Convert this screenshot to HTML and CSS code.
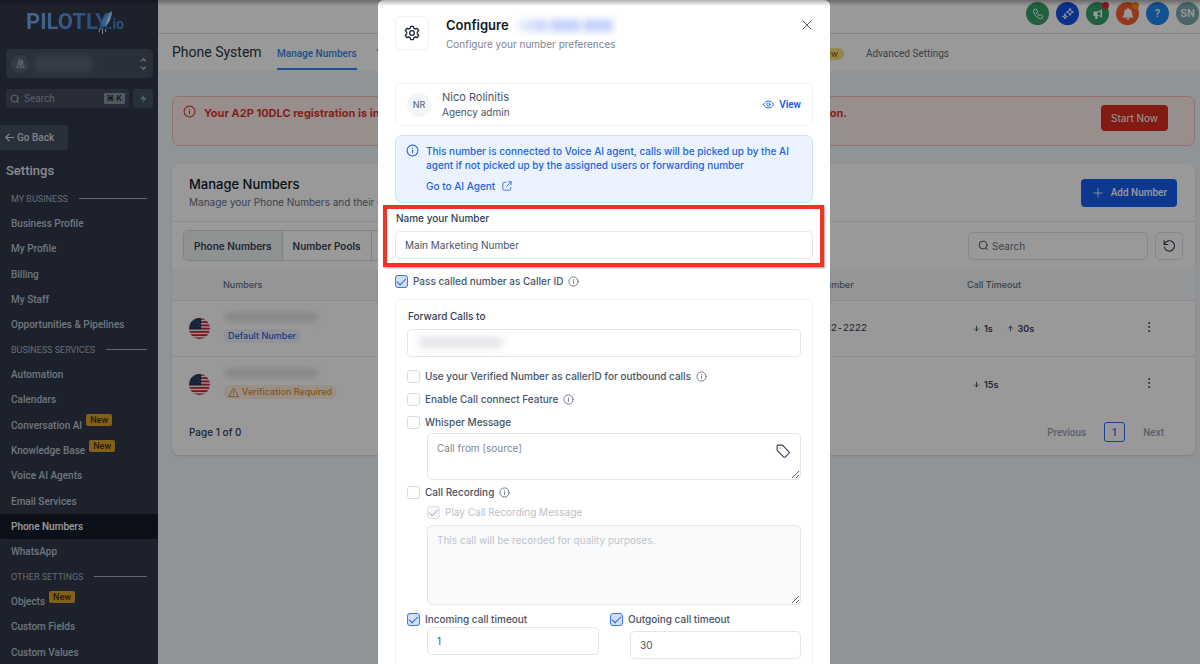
FILE: index.html
```html
<!DOCTYPE html>
<html lang="en">
<head>
    <meta charset="UTF-8">
    <meta name="viewport" content="width=device-width, initial-scale=1.0">
    <title>Phone System - Manage Numbers</title>
    <link rel="stylesheet" href="styles.css">
</head>
<body>
    <!-- Shared icons -->
    <svg class="sprite" aria-hidden="true">
        <symbol id="icon-info" viewBox="0 0 24 24"><circle cx="12" cy="12" r="10"/><path d="M12 16v-5M12 8v.01"/></symbol>
        <symbol id="icon-search" viewBox="0 0 24 24"><circle cx="11" cy="11" r="8.5"/><path d="M21 21l-4-4"/></symbol>
        <symbol id="icon-dots" viewBox="0 0 24 24"><circle cx="12" cy="4" r="1"/><circle cx="12" cy="12" r="1"/><circle cx="12" cy="20" r="1"/></symbol>
        <symbol id="icon-down" viewBox="0 0 24 24"><path d="M12 4v16M5 13l7 7 7-7"/></symbol>
        <symbol id="icon-up" viewBox="0 0 24 24"><path d="M12 20V4M5 11l7-7 7 7"/></symbol>
        <symbol id="icon-flag" viewBox="0 0 20 20">
            <clipPath id="flag-clip"><circle cx="10" cy="10" r="10"/></clipPath>
            <g clip-path="url(#flag-clip)">
                <rect width="20" height="20" fill="#f2eeee"/>
                <path d="M0 .8h20M0 3.9h20M0 7h20M0 10.1h20M0 13.2h20M0 16.3h20M0 19.4h20" stroke="#d0202f" stroke-width="1.6"/>
                <rect width="11.5" height="10.7" fill="#26375c"/>
                <path d="M2 2h9M1 4h10M2 6h9M1 8h10" stroke="#8f9bb8" stroke-width=".5" stroke-dasharray=".6 1.2"/>
            </g>
        </symbol>
    </svg>

    <div class="app">
        <aside class="sidebar">
            <div class="logo">
                <span class="logo-name">PILOTLY</span><span class="logo-tld">.io</span>
                <svg class="logo-rocket" viewBox="0 0 16 26" aria-hidden="true">
                    <path d="M14.500 1C9 4 5 9 4 15l4 2c4-4 7-9 6.500-16z" fill="#5b9fe8"/>
                    <path d="M14.500 1C11 6 9 12 8 17c4-4 7-9 6.500-16z" fill="#b8dcff"/>
                    <path d="M5 12l-4 5 3-1zM10 15l1 5-3-3z" fill="#3578c8"/>
                    <path d="M3 18l-1 4M5.500 19v5M8 19l1 3" stroke="#d6e2ee" stroke-width="1"/>
                </svg>
            </div>

            <button class="account" type="button" aria-label="Switch account">
                <span class="account-icon">
                    <svg class="icon" viewBox="0 0 24 24"><circle cx="12" cy="8" r="6"/><circle cx="12" cy="8" r="2"/><path d="M7 12c1 3 3 4 5 7 2-3 4-4 5-7M5 15l-3 7h20l-3-7"/></svg>
                </span>
                <span class="account-blur"></span>
                <svg class="icon account-arrows" viewBox="0 0 12 24"><path d="M2 7l4-4 4 4M2 17l4 4 4-4"/></svg>
            </button>

            <div class="quick">
                <label class="quick-search">
                    <svg class="icon" aria-hidden="true"><use href="#icon-search"/></svg>
                    <input type="text" placeholder="Search" aria-label="Search">
                    <kbd>⌘ K</kbd>
                </label>
                <button class="quick-bolt" type="button" aria-label="Quick actions">
                    <svg viewBox="0 0 24 24"><path d="M14 1L3 14h8l-1 9 11-13h-8z" fill="#5fb5ab"/></svg>
                </button>
            </div>

            <a class="go-back" href="#">
                <svg class="icon" viewBox="0 0 24 24" aria-hidden="true"><path d="M23 12H2M11 3l-9 9 9 9"/></svg>
                Go Back
            </a>

            <h2 class="sidebar-title">Settings</h2>

            <nav>
                <h3 class="group-title">MY BUSINESS</h3>
                <ul class="group">
                    <li><a href="#">Business Profile</a></li>
                    <li><a href="#">My Profile</a></li>
                    <li><a href="#">Billing</a></li>
                    <li><a href="#">My Staff</a></li>
                    <li><a href="#">Opportunities &amp; Pipelines</a></li>
                </ul>
                <h3 class="group-title">BUSINESS SERVICES</h3>
                <ul class="group">
                    <li><a href="#">Automation</a></li>
                    <li><a href="#">Calendars</a></li>
                    <li><a href="#">Conversation AI <span class="tag-new">New</span></a></li>
                    <li><a href="#">Knowledge Base <span class="tag-new">New</span></a></li>
                    <li><a href="#">Voice AI Agents</a></li>
                    <li><a href="#">Email Services</a></li>
                    <li><a class="active" href="#">Phone Numbers</a></li>
                    <li><a href="#">WhatsApp</a></li>
                </ul>
                <h3 class="group-title">OTHER SETTINGS</h3>
                <ul class="group">
                    <li><a href="#">Objects <span class="tag-new">New</span></a></li>
                    <li><a href="#">Custom Fields</a></li>
                    <li><a href="#">Custom Values</a></li>
                </ul>
            </nav>
        </aside>

        <div class="content">
            <header class="topbar">
                <button class="round green" type="button" aria-label="Phone">
                    <svg class="icon" viewBox="0 0 24 24"><path d="M7 2L3 4c-1 8 8 18 17 17l2-4-5-4-3 2c-2-1-4-3-5-5l2-3z"/></svg>
                </button>
                <button class="round blue" type="button" aria-label="AI">
                    <svg class="icon" viewBox="0 0 24 24"><path d="M16 1l2 5 5 2-5 2-2 5-2-5-5-2 5-2zM6 12l1 4 4 1-4 1-1 4-1-4-4-1 4-1z"/></svg>
                </button>
                <button class="round green" type="button" aria-label="Announcements">
                    <svg viewBox="0 0 24 24" fill="#fff"><path d="M20 2v18c-3-3-6-4-9-4v6H7l-1-6H3V7h7c4 0 7-2 10-5zm-3 5c-2 1-4 2-6 2v5c2 0 4 1 6 2z"/></svg>
                    <span class="dot red"></span>
                </button>
                <button class="round orange" type="button" aria-label="Notifications">
                    <svg viewBox="0 0 24 24" fill="#fff"><path d="M12 0c1 0 2 1 2 2 4 1 6 4 6 8 0 5 2 6 3 9H1c1-3 3-4 3-9 0-4 2-7 6-8 0-1 1-2 2-2zM9 20h6c0 4-6 4-6 0z"/></svg>
                    <span class="dot amber"></span>
                </button>
                <button class="round sky" type="button">?</button>
                <button class="round teal" type="button">SN</button>
            </header>

            <div class="tabbar">
                <h1>Phone System</h1>
                <nav class="tabs">
                    <a class="active" href="#">Manage Numbers</a>
                    <a href="#">Voice Calls</a>
                </nav>
                <nav class="tabs tabs-end">
                    <a href="#">Trust Center <span class="pill-new">New</span></a>
                    <a href="#">Advanced Settings</a>
                </nav>
            </div>

            <main>
                <section class="notice">
                    <svg class="icon" aria-hidden="true"><use href="#icon-info"/></svg>
                    <p><span>Your A2P 10DLC registration is in</span><span>action.</span></p>
                    <button type="button">Start Now</button>
                </section>

                <section class="card">
                    <div class="card-head">
                        <div>
                            <h2>Manage Numbers</h2>
                            <p>Manage your Phone Numbers and their configuration</p>
                        </div>
                        <button class="add" type="button">
                            <svg class="icon" viewBox="0 0 24 24" aria-hidden="true"><path d="M12 2v20M2 12h20"/></svg>
                            Add Number
                        </button>
                    </div>

                    <div class="toolbar">
                        <div class="segments">
                            <button class="active" type="button">Phone Numbers</button>
                            <button type="button">Number Pools</button>
                            <button type="button">Settings</button>
                        </div>
                        <label class="search">
                            <svg class="icon" aria-hidden="true"><use href="#icon-search"/></svg>
                            <input type="text" placeholder="Search" aria-label="Search numbers">
                        </label>
                        <button class="reload" type="button" aria-label="Reload">
                            <svg class="icon" viewBox="0 0 24 24"><path d="M2 3v7h7M3 9a9.500 9.500 0 1 1-.5 6"/></svg>
                        </button>
                    </div>

                    <table>
                        <thead>
                            <tr>
                                <th class="col-flag"></th>
                                <th class="col-number">Numbers</th>
                                <th class="col-forward">Forwarding Number</th>
                                <th class="col-timeout">Call Timeout</th>
                                <th></th>
                            </tr>
                        </thead>
                        <tbody>
                            <tr>
                                <td class="col-flag"><svg class="flag"><use href="#icon-flag"/></svg></td>
                                <td><span class="number-blur"></span><span class="pill">Default Number</span></td>
                                <td class="forward">+1 222-222-2222</td>
                                <td>
                                    <span class="time"><svg class="icon"><use href="#icon-down"/></svg>1s</span>
                                    <span class="time"><svg class="icon"><use href="#icon-up"/></svg>30s</span>
                                </td>
                                <td><button class="more" type="button" aria-label="More"><svg class="icon"><use href="#icon-dots"/></svg></button></td>
                            </tr>
                            <tr>
                                <td class="col-flag"><svg class="flag"><use href="#icon-flag"/></svg></td>
                                <td>
                                    <span class="number-blur"></span>
                                    <span class="pill warn">
                                        <svg class="icon" viewBox="0 0 24 24"><path d="M12 3L1.500 21h21zM12 10v5M12 18v.01"/></svg>
                                        Verification Required
                                    </span>
                                </td>
                                <td></td>
                                <td><span class="time"><svg class="icon"><use href="#icon-down"/></svg>15s</span></td>
                                <td><button class="more" type="button" aria-label="More"><svg class="icon"><use href="#icon-dots"/></svg></button></td>
                            </tr>
                        </tbody>
                    </table>

                    <div class="pager">
                        <span class="pager-info">Page 1 of 0</span>
                        <button type="button">Previous</button>
                        <button class="current" type="button">1</button>
                        <button type="button">Next</button>
                    </div>
                </section>
            </main>
        </div>
    </div>

    <!-- Configure number dialog -->
    <div class="overlay">
        <div class="modal" role="dialog" aria-labelledby="modal-title">
            <header class="modal-head">
                <span class="modal-icon">
                    <svg class="icon" viewBox="0 0 24 24"><circle cx="12" cy="12" r="3.500"/><path d="M10 2h4l.8 3 2 1 3-.9 2.300 3.300-2 2.300v2.600l2 2.300-2.300 3.300-3-.9-2 1L14 22h-4l-.8-3-2-1-3 .9-2.300-3.300 2-2.300v-2.600l-2-2.300 2.300-3.300 3 .9 2-1z"/></svg>
                </span>
                <div class="modal-titles">
                    <h2 id="modal-title">Configure <span class="title-blur"><i></i><i></i><i></i></span></h2>
                    <p>Configure your number preferences</p>
                </div>
                <button class="close" type="button" aria-label="Close">
                    <svg class="icon" viewBox="0 0 24 24"><path d="M4 4l16 16M20 4L4 20"/></svg>
                </button>
            </header>

            <div class="user">
                <span class="avatar">NR</span>
                <div class="user-text">
                    <strong>Nico Rolinitis</strong>
                    <span>Agency admin</span>
                </div>
                <a class="view" href="#">
                    <svg class="icon" viewBox="0 0 24 24" aria-hidden="true"><path d="M1 12c5-10 17-10 22 0-5 10-17 10-22 0z"/><circle cx="12" cy="12" r="3.500"/></svg>
                    View
                </a>
            </div>

            <div class="agent">
                <svg class="icon" aria-hidden="true"><use href="#icon-info"/></svg>
                <div>
                    <p>This number is connected to Voice AI agent, calls will be picked up by the AI agent if not picked up by the assigned users or forwarding number</p>
                    <a href="#">Go to AI Agent
                        <svg class="icon" viewBox="0 0 24 24" aria-hidden="true"><path d="M9 3H5a3 3 0 0 0-3 3v13a3 3 0 0 0 3 3h13a3 3 0 0 0 3-3v-4M15 2h7v7M22 2L11 13"/></svg>
                    </a>
                </div>
            </div>

            <div class="field highlighted">
                <label for="number-name">Name your Number</label>
                <input type="text" id="number-name" value="Main Marketing Number">
            </div>

            <label class="check">
                <input type="checkbox" checked>
                Pass called number as Caller ID
                <svg class="icon"><use href="#icon-info"/></svg>
            </label>

            <div class="panel">
                <div class="field">
                    <label for="forward-to">Forward Calls to</label>
                    <div class="forward-box">
                        <input type="text" id="forward-to">
                        <span class="forward-blur"></span>
                    </div>
                </div>

                <div class="options">
                    <label class="check">
                        <input type="checkbox">
                        Use your Verified Number as callerID for outbound calls
                        <svg class="icon"><use href="#icon-info"/></svg>
                    </label>
                    <label class="check">
                        <input type="checkbox">
                        Enable Call connect Feature
                        <svg class="icon"><use href="#icon-info"/></svg>
                    </label>
                    <label class="check">
                        <input type="checkbox">
                        Whisper Message
                    </label>
                </div>

                <div class="nested whisper">
                    <textarea placeholder="Call from [source]" aria-label="Whisper Message"></textarea>
                    <button class="tag" type="button" aria-label="Insert custom value">
                        <svg class="icon" viewBox="0 0 24 24"><path d="M2 3.500A1.500 1.500 0 0 1 3.500 2H11l11 11a2 2 0 0 1 0 3l-6 6a2 2 0 0 1-3 0L2 11zM7 7v.01"/></svg>
                    </button>
                </div>

                <label class="check">
                    <input type="checkbox">
                    Call Recording
                    <svg class="icon"><use href="#icon-info"/></svg>
                </label>

                <div class="nested recording">
                    <label class="check disabled">
                        <input type="checkbox" checked disabled>
                        Play Call Recording Message
                    </label>
                    <textarea disabled aria-label="Call recording message">This call will be recorded for quality purposes.</textarea>
                </div>

                <div class="timeouts">
                    <div>
                        <label class="check">
                            <input type="checkbox" checked>
                            Incoming call timeout
                        </label>
                        <div class="nested">
                            <input type="text" value="1" aria-label="Incoming call timeout seconds">
                        </div>
                    </div>
                    <div class="outgoing">
                        <label class="check">
                            <input type="checkbox" checked>
                            Outgoing call timeout
                        </label>
                        <div class="nested">
                            <input type="text" value="30" aria-label="Outgoing call timeout seconds">
                        </div>
                    </div>
                </div>
            </div>
        </div>
    </div>
</body>
</html>
```
FILE: styles.css
```css
* {
    box-sizing: border-box;
}

body {
    margin: 0;
    height: 100vh;
    overflow: hidden;
    font-family: Inter, sans-serif;
    font-size: 10px;
    color: #344054;
    background: #f2f7fa;
}

h1, h2, h3, p, ul {
    margin: 0;
    padding: 0;
    font-weight: 500;
}

ul {
    list-style: none;
}

a {
    color: inherit;
    text-decoration: none;
}

button, input, textarea {
    font: inherit;
    color: inherit;
    margin: 0;
}

button {
    background: none;
    border: none;
    padding: 0;
    cursor: pointer;
}

.sprite {
    position: absolute;
    width: 0;
    height: 0;
}

.icon {
    flex: none;
    width: 12px;
    height: 12px;
    fill: none;
    stroke: currentColor;
    stroke-width: 2;
    stroke-linecap: round;
    stroke-linejoin: round;
}

.app {
    display: flex;
    height: 100vh;
}

/* Sidebar */
.sidebar {
    flex: none;
    width: 158px;
    overflow: hidden;
    background: #2f384a;
    color: #bcc4cf;
    font-family: Roboto, sans-serif;
}

.logo {
    position: relative;
    display: flex;
    align-items: baseline;
    height: 49px;
    padding: 8px 0 0 26px;
    line-height: 27px;
}

.logo-name {
    font-size: 22px;
    font-weight: 700;
    background: linear-gradient(90deg, #7ca8e8, #3f7fd0);
    background-clip: text;
    color: transparent;
}

.logo-tld {
    font-size: 14px;
    font-weight: 500;
    color: #4a90dc;
}

.logo-rocket {
    position: absolute;
    left: 97px;
    top: 10px;
    width: 16px;
    height: 26px;
    fill: none;
}

.account {
    display: flex;
    align-items: center;
    width: 147px;
    height: 29px;
    margin-left: 6px;
    padding: 0 6px 0 5px;
    border-radius: 5px;
    background: #475062;
}

.account-icon {
    display: flex;
    align-items: center;
    justify-content: center;
    width: 18px;
    height: 18px;
    border-radius: 50%;
    background: #596273;
}

.account-icon .icon {
    width: 9px;
    height: 9px;
}

.account-blur {
    width: 58px;
    height: 16px;
    margin-left: 5px;
    background: #5b6a7c;
    filter: blur(4px);
}

.account-arrows {
    width: 7px;
    height: 14px;
    margin-left: auto;
}

.quick {
    display: flex;
    gap: 4px;
    margin: 11px 5px 0 6px;
}

.quick-search {
    display: flex;
    align-items: center;
    flex: 1;
    min-width: 0;
    height: 19px;
    padding: 0 4px;
    border-radius: 3px;
    background: #434c5e;
}

.quick-search .icon {
    width: 10px;
    height: 10px;
}

.quick-search input {
    flex: 1;
    min-width: 0;
    padding: 0 4px;
    border: none;
    background: none;
}

.quick-search input::placeholder {
    color: #98a1ae;
}

kbd {
    padding: 0 3px;
    border-radius: 1px;
    background: #8b94a2;
    color: #1d2532;
    font: 600 8px/11px Inter, "DejaVu Sans", sans-serif;
}

.quick-bolt {
    display: flex;
    align-items: center;
    justify-content: center;
    width: 20px;
    border-radius: 3px;
    background: #46515f;
}

.quick-bolt svg {
    width: 9px;
    height: 9px;
}

.go-back {
    display: flex;
    align-items: center;
    gap: 3px;
    width: 68px;
    height: 25px;
    margin-top: 17px;
    padding-left: 5px;
    border-radius: 0 4px 4px 0;
    background: #475062;
    color: #d8dde4;
    font-size: 10px;
    font-weight: 500;
}

.go-back .icon {
    width: 9px;
    height: 9px;
    stroke-width: 3;
}

.sidebar-title {
    margin: 12px 0 6px 6px;
    font-size: 13px;
    line-height: 18px;
    color: #e2e6eb;
}

.group-title {
    display: flex;
    align-items: center;
    gap: 11px;
    height: 25px;
    padding: 0 11px;
    font-size: 9px;
    font-weight: 400;
    color: #aab2be;
}

.group-title::after {
    content: "";
    flex: 1;
    height: 1px;
    background: #a4acb8;
}

.group a {
    display: flex;
    align-items: center;
    height: 25px;
    padding-left: 11px;
    border-radius: 3px;
    font-size: 10px;
    font-weight: 500;
}

.group li:nth-child(3n) a {
    height: 26px;
}

.group .active {
    background: #141c2a;
    color: #fff;
}

.tag-new {
    margin: 0 0 10px 4px;
    padding: 0 4px;
    border-radius: 2px;
    background: #d9a029;
    color: #3e3110;
    font-size: 9px;
    line-height: 12px;
}

/* Top of the page */
.content {
    flex: 1;
    min-width: 0;
}

.topbar {
    display: flex;
    justify-content: flex-end;
    gap: 7px;
    height: 34px;
    padding: 2px 1px 0 0;
    background: #fff;
    border-bottom: 1px solid #dde1e6;
}

.round {
    position: relative;
    display: flex;
    align-items: center;
    justify-content: center;
    width: 23px;
    height: 23px;
    border-radius: 50%;
    color: #fff;
    font: 500 11px Roboto, sans-serif;
}

.round svg {
    width: 12px;
    height: 12px;
}

.green {
    background: #38a169;
}

.blue {
    background: #1450e8;
}

.orange {
    background: #f4622e;
}

.sky {
    background: #1f87f0;
}

.teal {
    background: #79aaae;
}

.dot {
    position: absolute;
    top: 0;
    right: 0;
    width: 7px;
    height: 7px;
    border-radius: 50%;
}

.red {
    background: #f01e2e;
}

.amber {
    background: #f2921d;
}

.tabbar {
    display: flex;
    align-items: center;
    height: 36px;
    padding: 0 14px;
    background: #fff;
    font-family: Roboto, sans-serif;
}

.tabbar h1 {
    width: 105px;
    font-size: 14px;
    font-weight: 400;
    color: #2a3342;
    white-space: nowrap;
}

.tabs {
    display: flex;
    align-items: stretch;
    gap: 20px;
    height: 36px;
    line-height: 39px;
    color: #5f6b7c;
}

.tabs a {
    white-space: nowrap;
}

.tabs .active {
    border-bottom: 2px solid #2f88e6;
    color: #2f88e6;
    font-weight: 500;
}

.tabs-end {
    gap: 22px;
    margin: 0 237px 0 auto;
}

.pill-new {
    padding: 1px 6px;
    border-radius: 7px;
    background: #f7e07a;
    color: #6b5a1a;
    font-size: 9px;
}

main {
    padding: 26px 5px 0 14px;
}

.notice {
    display: flex;
    align-items: flex-start;
    height: 50px;
    padding: 8px 26px 0 10px;
    border: 1px solid #f0c0ba;
    border-radius: 7px;
    background: #fdeeec;
    color: #e0352b;
}

.notice .icon {
    width: 13px;
    height: 13px;
}

.notice p {
    display: flex;
    justify-content: space-between;
    flex: 0 1 643px;
    margin-left: 8px;
    font-size: 11px;
    font-weight: 700;
    line-height: 16px;
    white-space: nowrap;
}

.notice button {
    height: 26px;
    margin-left: auto;
    padding: 0 10px;
    border-radius: 4px;
    background: #d92d20;
    color: #fff;
}

/* Numbers card */
.card {
    margin-top: 18px;
    border-radius: 7px;
    background: #fff;
    box-shadow: 0 1px 2px #cfd6dc;
}

.card-head {
    display: flex;
    align-items: center;
    justify-content: space-between;
    height: 58px;
    padding: 0 18px 0 17px;
    border-bottom: 1px solid #e4e7ec;
}

.card-head h2 {
    font-size: 13px;
    line-height: 18px;
    color: #101828;
}

.card-head p {
    font-size: 10px;
    font-weight: 400;
    line-height: 18px;
    color: #667085;
}

.add {
    display: flex;
    align-items: center;
    gap: 8px;
    height: 28px;
    padding: 0 10px 0 12px;
    border-radius: 4px;
    background: #155eef;
    color: #fff;
    font-family: Roboto, sans-serif;
    font-size: 10px;
    font-weight: 500;
}

.add .icon {
    width: 10px;
    height: 10px;
}

.toolbar {
    display: flex;
    align-items: center;
    gap: 7px;
    height: 47px;
    padding: 0 12px 0 11px;
}

.segments {
    display: flex;
    height: 31px;
    margin-right: auto;
    border: 1px solid #d5dae0;
    border-radius: 5px;
    overflow: hidden;
}

.segments button {
    padding: 0 10px;
    border-right: 1px solid #d5dae0;
    font-weight: 600;
}

.segments button:last-child {
    border-right: none;
}

.segments .active {
    background: #eef3f6;
}

.search {
    display: flex;
    align-items: center;
    gap: 3px;
    width: 180px;
    height: 28px;
    padding: 0 9px;
    border: 1px solid #dfe3e8;
    border-radius: 5px;
}

.search input {
    flex: 1;
    min-width: 0;
    padding: 0;
    border: none;
    background: none;
    font-size: 10px;
}

.search input::placeholder {
    color: #667085;
}

.search .icon {
    width: 11px;
    height: 11px;
}

.reload {
    display: flex;
    align-items: center;
    justify-content: center;
    width: 28px;
    height: 28px;
    border: 1px solid #dfe3e8;
    border-radius: 5px;
}

.reload .icon {
    width: 13px;
    height: 13px;
}

table {
    width: 100%;
    border-collapse: collapse;
    table-layout: fixed;
}

th {
    height: 31px;
    padding: 0;
    background: #f7f8fa;
    color: #667085;
    font-size: 9px;
    font-weight: 500;
    text-align: left;
}

td {
    height: 56px;
    padding: 0;
}

tr {
    border-bottom: 1px solid #e4e7ec;
}

tbody tr:last-child {
    border-bottom: none;
}

.col-flag {
    width: 51px;
    padding-left: 17px;
}

.col-number {
    width: 545px;
}

.col-forward {
    width: 199px;
}

.col-timeout {
    width: 176px;
}

.flag {
    display: block;
    width: 21px;
    height: 21px;
}

.number-blur {
    display: block;
    width: 92px;
    height: 8px;
    margin: 0 0 8px 2px;
    background: #ddd;
    filter: blur(3px);
}

.pill {
    display: inline-flex;
    align-items: center;
    gap: 3px;
    padding: 0 5px;
    border-radius: 7px;
    background: #eff4ff;
    color: #2f5fd8;
    font-size: 9px;
    font-weight: 500;
    line-height: 14px;
}

.warn {
    background: #fdf1e0;
    color: #dd8a2a;
}

.warn .icon {
    width: 11px;
    height: 11px;
}

.forward {
    padding-left: 9px;
    font-family: "Liberation Mono", monospace;
}

.time {
    display: inline-flex;
    align-items: center;
    gap: 4px;
    margin-right: 5px;
    padding-left: 6px;
    font-size: 9px;
    font-weight: 600;
}

.time .icon {
    width: 7px;
    height: 7px;
    stroke-width: 3;
}

.more {
    display: block;
}

.pager {
    display: flex;
    align-items: center;
    gap: 9px;
    height: 43px;
    padding: 0 22px 3px 17px;
}

.pager-info {
    margin-right: auto;
    font-size: 10px;
    font-weight: 500;
}

.pager button {
    padding: 0 9px;
    height: 22px;
    border-radius: 3px;
    color: #98a2b3;
    font-family: Roboto, sans-serif;
    font-weight: 500;
}

.pager .current {
    width: 21px;
    height: 20px;
    padding: 0;
    border: 1px solid #2f6bf0;
    color: #2f6bf0;
}

/* Dialog */
.overlay {
    position: fixed;
    inset: 0;
    display: flex;
    justify-content: center;
    padding-left: 8px;
    overflow: hidden;
    background: rgba(0, 0, 0, 0.4);
}

.overlay::after {
    content: "";
    position: absolute;
    inset: 0 0 auto 0;
    height: 6px;
    background: linear-gradient(rgba(0, 0, 0, 0.3), transparent);
}

.modal {
    width: 452px;
    height: max-content;
    min-height: 100%;
    padding: 16px 17px;
    border-radius: 6px;
    background: #fff;
}

.modal-head {
    display: flex;
    align-items: flex-start;
    height: 67px;
}

.modal-icon {
    display: flex;
    align-items: center;
    justify-content: center;
    width: 34px;
    height: 34px;
    border: 1px solid #eff1f4;
    border-radius: 5px;
    color: #1d2633;
}

.modal-icon .icon {
    width: 16px;
    height: 16px;
}

.modal-titles {
    flex: 1;
    margin-left: 17px;
}

.modal-titles h2 {
    display: flex;
    align-items: center;
    font-size: 13px;
    font-weight: 600;
    line-height: 18px;
    color: #101828;
}

.title-blur {
    display: flex;
    gap: 3px;
    margin-left: 8px;
    filter: blur(3px);
}

.title-blur i {
    width: 30px;
    height: 13px;
    background: #c5d4fb;
}

.title-blur i:first-child {
    background: linear-gradient(90deg, #edf2fe, #c5d4fb);
}

.modal-titles p {
    font-size: 10px;
    font-weight: 400;
    line-height: 20px;
    color: #7b8494;
}

.close {
    margin: 3px 0 0;
    color: #555f6e;
}

.user {
    display: flex;
    align-items: center;
    height: 43px;
    padding: 0 11px;
    border: 1px solid #f0f2f5;
    border-radius: 5px;
}

.avatar {
    width: 24px;
    height: 24px;
    border-radius: 50%;
    background: #f2f4f7;
    color: #667085;
    font-size: 9px;
    font-weight: 500;
    line-height: 24px;
    text-align: center;
}

.user-text {
    display: flex;
    flex-direction: column;
    flex: 1;
    margin-left: 11px;
    line-height: 15px;
    color: #475467;
}

.user-text strong {
    font-size: 11px;
    font-weight: 400;
}

.view {
    display: flex;
    align-items: center;
    gap: 5px;
    color: #155eef;
    font-family: Roboto, sans-serif;
    font-weight: 600;
}

.view .icon {
    width: 11px;
    height: 11px;
}

.agent {
    display: flex;
    gap: 7px;
    height: 68px;
    margin-top: 9px;
    padding: 8px 20px 0 10px;
    border: 1px solid #cfe0fb;
    border-radius: 7px;
    background: #eaf3ff;
    color: #2463e2;
    font-weight: 500;
    line-height: 14px;
}

.agent > .icon {
    width: 13px;
    height: 13px;
}

.agent p {
    margin-bottom: 7px;
}

.agent a {
    display: flex;
    align-items: center;
    gap: 7px;
}

.agent a .icon {
    width: 10px;
    height: 10px;
}

.field label {
    display: block;
    margin-bottom: 5px;
    padding-left: 1px;
    font-weight: 500;
    line-height: 16px;
}

.modal input[type="text"], textarea {
    display: block;
    width: 100%;
    height: 28px;
    padding: 0 9px;
    border: 1px solid #e2e5ea;
    border-radius: 5px;
    background: #fff;
    color: #475467;
}

/* Red frame drawing attention to the number name */
.highlighted {
    position: relative;
    margin-top: 7px;
}

.highlighted::after {
    content: "";
    position: absolute;
    inset: -5px -11px -8px -12px;
    border: 4px solid #ee3424;
    box-shadow: 1px 1px 2px rgba(0, 0, 0, 0.4);
    pointer-events: none;
}

.check {
    display: flex;
    align-items: center;
    gap: 5px;
    font-weight: 500;
    line-height: 17px;
    color: #475467;
}

.check .icon {
    width: 11px;
    height: 11px;
    color: #667085;
}

.check input {
    appearance: none;
    display: flex;
    justify-content: center;
    width: 13px;
    height: 13px;
    border: 1px solid #d8dce2;
    border-radius: 3px;
    background: #fff;
}

.check input:checked {
    border-color: #3b76ee;
    background: #cfdffc;
    color: #2463e2;
}

.check input:checked::before {
    content: "";
    width: 4px;
    height: 8px;
    border: solid;
    border-width: 0 1px 1px 0;
    transform: rotate(45deg);
}

.check.disabled {
    color: #bcc0c8;
    font-weight: 400;
}

.check input:disabled {
    border-color: #dcdfe5;
    background: #f7f8fa;
    color: #b0b5bf;
}

.highlighted + .check {
    margin: 14px 0 9px;
}

.panel {
    padding: 8px 11px 20px;
    border: 1px solid #f1f3f5;
    border-radius: 6px;
}

.forward-box {
    position: relative;
}

.forward-blur {
    position: absolute;
    left: 12px;
    top: 9px;
    width: 84px;
    height: 9px;
    background: #dcdfe3;
    filter: blur(4px);
}

.options {
    display: grid;
    gap: 6px;
    margin: 11px 0 2px;
}

.nested {
    position: relative;
    margin-left: 20px;
}

textarea {
    resize: both;
}

.modal textarea {
    height: 47px;
    padding: 7px 9px;
    line-height: 14px;
}

textarea::placeholder {
    color: #7f8896;
}

.tag {
    position: absolute;
    top: 11px;
    right: 11px;
}

.tag .icon {
    display: block;
    width: 14px;
    height: 14px;
}

.whisper {
    margin-bottom: 4px;
}

.recording {
    display: grid;
    gap: 4px;
    margin-top: 3px;
}

.modal .recording textarea {
    height: 80px;
    background: #f9fafb;
    color: #c0c4cc;
}

.timeouts {
    display: grid;
    grid-template-columns: 192px 1fr;
    gap: 11px;
    margin-top: 7px;
}

.timeouts .check {
    line-height: 15px;
}

.outgoing .check {
    margin-bottom: 4px;
}
```
